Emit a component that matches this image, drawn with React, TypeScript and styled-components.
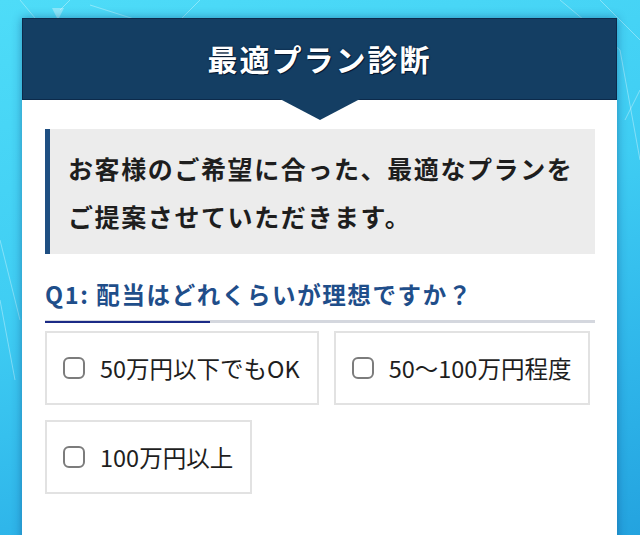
import styled, { createGlobalStyle } from 'styled-components';

const GlobalStyle = createGlobalStyle`
  html, body {
    margin: 0;
    padding: 0;
  }
  body {
    font-family: "Noto Sans CJK JP", "Noto Sans", sans-serif;
  }
  #root {
    height: 535px;
    overflow: hidden;
  }
`;

const Page = styled.main`
  position: relative;
  height: 535px;
  padding: 18px 23px 0 22px;
  box-sizing: border-box;
  background: linear-gradient(165deg, #4edcf8 0%, #3fcdf3 45%, #2fb6ea 75%, #24a3df 100%);
  overflow: hidden;
`;

const Backdrop = styled.svg`
  position: absolute;
  inset: 0;
  width: 100%;
  height: 100%;
  pointer-events: none;
`;

const Card = styled.section`
  position: relative;
  width: 595px;
  min-height: 530px;
  background: #fff;
  box-shadow: 0 0 9px rgba(10, 50, 110, 0.45);
`;

const Header = styled.header`
  position: relative;
  height: 82px;
  display: flex;
  align-items: center;
  justify-content: center;
  background: #143e63;
  border: 1px solid #0c2a4b;
  box-sizing: border-box;

  &::after {
    content: '';
    position: absolute;
    left: 50%;
    bottom: -21px;
    transform: translateX(-50%);
    border-left: 40px solid transparent;
    border-right: 40px solid transparent;
    border-top: 21px solid #143e63;
  }
`;

const Title = styled.h1`
  margin: 0 0 2px;
  color: #fff;
  font-size: 30px;
  font-weight: 700;
  letter-spacing: 2px;
  text-shadow: 0 0 2px #061a33, 1px 1px 0 #061a33;
`;

const Body = styled.div`
  padding: 29px 22px 40px 23px;
`;

const Lead = styled.p`
  margin: 0;
  padding: 15px 16px 14px 18px;
  background: #ececec;
  border-left: 5px solid #1f4f82;
  color: #1e1e1e;
  font-size: 25px;
  font-weight: 700;
  line-height: 48px;
  letter-spacing: 1.6px;
`;

const Question = styled.h2`
  position: relative;
  margin: 22px 0 0;
  padding-bottom: 8px;
  color: #1f4e8a;
  font-size: 23.5px;
  font-weight: 700;
  line-height: 36px;
  letter-spacing: 1.6px;
  border-bottom: 3px solid #d4d7de;

  &::after {
    content: '';
    position: absolute;
    left: 0;
    bottom: -3px;
    width: 165px;
    height: 2px;
    background: #1b2a86;
  }
`;

const Options = styled.div`
  display: flex;
  flex-wrap: wrap;
  gap: 15px;
  margin-top: 8px;
`;

const Option = styled.label`
  display: flex;
  align-items: center;
  gap: 15px;
  height: 74px;
  padding: 0 17px 0 16px;
  box-sizing: border-box;
  border: 2px solid #e2e2e2;
  color: #1e1e1e;
  font-size: 23.5px;
  font-weight: 400;
  cursor: pointer;
`;

const Box = styled.span`
  width: 22px;
  height: 22px;
  box-sizing: border-box;
  border: 2px solid #7c7c7c;
  border-radius: 6px;
  background: #fff;
  flex-shrink: 0;
`;

const choices = ['50万円以下でもOK', '50〜100万円程度', '100万円以上'];

const lines: [number, number, number, number][] = [
  [20, 0, 70, 60],
  [70, 0, 60, 10],
  [90, 5, 200, 40],
  [200, 0, 180, 20],
  [560, 0, 620, 50],
  [620, 50, 640, 160],
  [600, 0, 640, 40],
  [0, 240, 20, 320],
  [0, 300, 15, 380],
  [625, 120, 640, 90],
];

export default function App() {
  return (
    <>
      <GlobalStyle />
      <Page>
        <Backdrop viewBox="0 0 640 535" preserveAspectRatio="none">
          {lines.map(([x1, y1, x2, y2], i) => (
            <line
              key={i}
              x1={x1}
              y1={y1}
              x2={x2}
              y2={y2}
              stroke="rgba(255,255,255,0.35)"
              strokeWidth="1"
            />
          ))}
          <polygon points="52,8 64,8 58,20" fill="rgba(255,255,255,0.35)" />
        </Backdrop>
        <Card>
          <Header>
            <Title>最適プラン診断</Title>
          </Header>
          <Body>
            <Lead>
              お客様のご希望に合った、最適なプランをご提案させていただきます。
            </Lead>
            <Question>Q1: 配当はどれくらいが理想ですか？</Question>
            <Options>
              {choices.map((c) => (
                <Option key={c}>
                  <Box />
                  {c}
                </Option>
              ))}
            </Options>
          </Body>
        </Card>
      </Page>
    </>
  );
}
